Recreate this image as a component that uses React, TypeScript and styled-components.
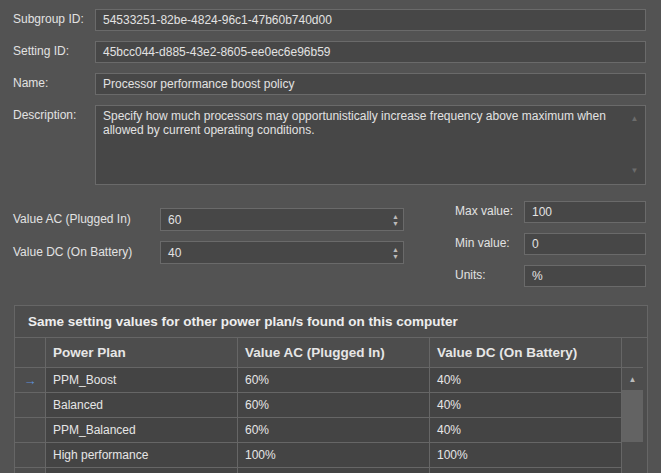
import React from "react";
import styled, { createGlobalStyle } from "styled-components";

const Global = createGlobalStyle`
  body { margin: 0; background: #535353; }
  * { box-sizing: border-box; }
`;

const Page = styled.div`
  width: 661px; height: 473px; overflow: hidden; background: #535353;
  font-family: "Liberation Sans", Arial, sans-serif; font-size: 12px; color: #e2e2e2;
  padding: 9px 15px 0 13px;
`;
const Row = styled.div`
  display: flex; align-items: flex-start; margin-bottom: 10px;
`;
const Label = styled.div<{ $w: number; $top?: number }>`
  width: ${p => p.$w}px; flex-shrink: 0; padding-top: ${p => p.$top ?? 3}px; line-height: 14px;
`;
const Field = styled.div<{ $h?: number; $w?: number }>`
  flex: ${p => (p.$w ? "none" : 1)}; width: ${p => (p.$w ? p.$w + "px" : "auto")};
  height: ${p => p.$h ?? 22}px; background: #474747; border: 1px solid #6a6a6a;
  padding: 3px 7px; line-height: 14px; display: flex; position: relative;
`;
const Text = styled.div<{ $pt?: number }>` flex: 1; padding-top: ${p => p.$pt ?? 0}px; `;
const VScroll = styled.div`
  width: 21px; margin: -3px -7px -3px 0; display: flex; flex-direction: column;
  justify-content: space-between; align-items: center; padding: 6px 0; color: #6c6c6c; font-size: 8px;
`;
const Middle = styled.div`
  display: flex; justify-content: space-between; margin-top: 5px;
`;
const Col = styled.div<{ $pt: number }>` display: flex; flex-direction: column; padding-top: ${p => p.$pt}px; `;
const Spin = styled.div`
  display: flex; flex-direction: column; justify-content: center; align-items: center;
  font-size: 7px; line-height: 7px; color: #bbb; margin-right: -3px;
`;
const Panel = styled.div`
  margin: 8px -2px 0 1px; border: 1px solid #666; background: #4d4d4d;
`;
const Title = styled.div`
  height: 32px; padding: 8px 13px; font-weight: bold; font-size: 13.5px;
  color: #eee; border-bottom: 1px solid #666;
`;
const Grid = styled.div`
  display: grid; grid-template-columns: 31px 192px 192px 192px 21px;
`;
const Cell = styled.div<{ $head?: boolean; $dark?: boolean }>`
  height: ${p => (p.$head ? 30 : 25)}px; padding: 0 7px; display: flex; align-items: center;
  border-right: 1px solid #666; border-bottom: 1px solid #666;
  background: ${p => (p.$dark ? "#444" : "#4d4d4d")};
  font-weight: ${p => (p.$head ? "bold" : "normal")}; font-size: ${p => (p.$head ? 13.5 : 12)}px;
  color: #e6e6e6;
`;
const Indicator = styled(Cell)` justify-content: center; color: #5d8fd8; font-size: 13px; `;
const ScrollCol = styled.div`
  grid-row: 2 / span 5; grid-column: 5; display: flex; flex-direction: column;
  align-items: center; color: #bbb; font-size: 8px; padding-top: 7px; background: #4d4d4d;
`;
const Thumb = styled.div` width: 21px; height: 52px; background: #636363; margin: 6px 0 auto; `;
const Down = styled.span` padding-bottom: 6px; `;

const rows = [
  ["PPM_Boost", "60%", "40%"],
  ["Balanced", "60%", "40%"],
  ["PPM_Balanced", "60%", "40%"],
  ["High performance", "100%", "100%"],
  ["", "", ""],
];

export default function App() {
  return (
    <Page>
      <Global />
      <Row><Label $w={82}>Subgroup ID:</Label><Field><Text>54533251-82be-4824-96c1-47b60b740d00</Text></Field></Row>
      <Row><Label $w={82}>Setting ID:</Label><Field><Text>45bcc044-d885-43e2-8605-ee0ec6e96b59</Text></Field></Row>
      <Row><Label $w={82}>Name:</Label><Field><Text>Processor performance boost policy</Text></Field></Row>
      <Row>
        <Label $w={82}>Description:</Label>
        <Field $h={80}>
          <Text>Specify how much processors may opportunistically increase frequency above maximum when allowed by current operating conditions.</Text>
          <VScroll><span>▲</span><span>▼</span></VScroll>
        </Field>
      </Row>
      <Middle>
        <Col $pt={13}>
          <Row><Label $w={147} $top={4}>Value AC (Plugged In)</Label><Field $w={244} $h={23}><Text $pt={1}>60</Text><Spin>▲<br />▼</Spin></Field></Row>
          <Row><Label $w={147} $top={4}>Value DC (On Battery)</Label><Field $w={244} $h={23}><Text $pt={1}>40</Text><Spin>▲<br />▼</Spin></Field></Row>
        </Col>
        <Col $pt={6}>
          <Row><Label $w={69}>Max value:</Label><Field $w={122}><Text>100</Text></Field></Row>
          <Row><Label $w={69}>Min value:</Label><Field $w={122}><Text>0</Text></Field></Row>
          <Row><Label $w={69}>Units:</Label><Field $w={122}><Text>%</Text></Field></Row>
        </Col>
      </Middle>
      <Panel>
        <Title>Same setting values for other power plan/s found on this computer</Title>
        <Grid>
          <Cell $head />
          <Cell $head>Power Plan</Cell>
          <Cell $head>Value AC (Plugged In)</Cell>
          <Cell $head>Value DC (On Battery)</Cell>
          <Cell $head style={{ borderRight: "none" }} />
          {rows.map((r, i) => (
            <React.Fragment key={i}>
              <Indicator>{i === 0 ? "→" : ""}</Indicator>
              <Cell $dark>{r[0]}</Cell>
              <Cell $dark>{r[1]}</Cell>
              <Cell $dark>{r[2]}</Cell>
            </React.Fragment>
          ))}
          <ScrollCol><span>▲</span><Thumb /><Down>▼</Down></ScrollCol>
        </Grid>
      </Panel>
    </Page>
  );
}
